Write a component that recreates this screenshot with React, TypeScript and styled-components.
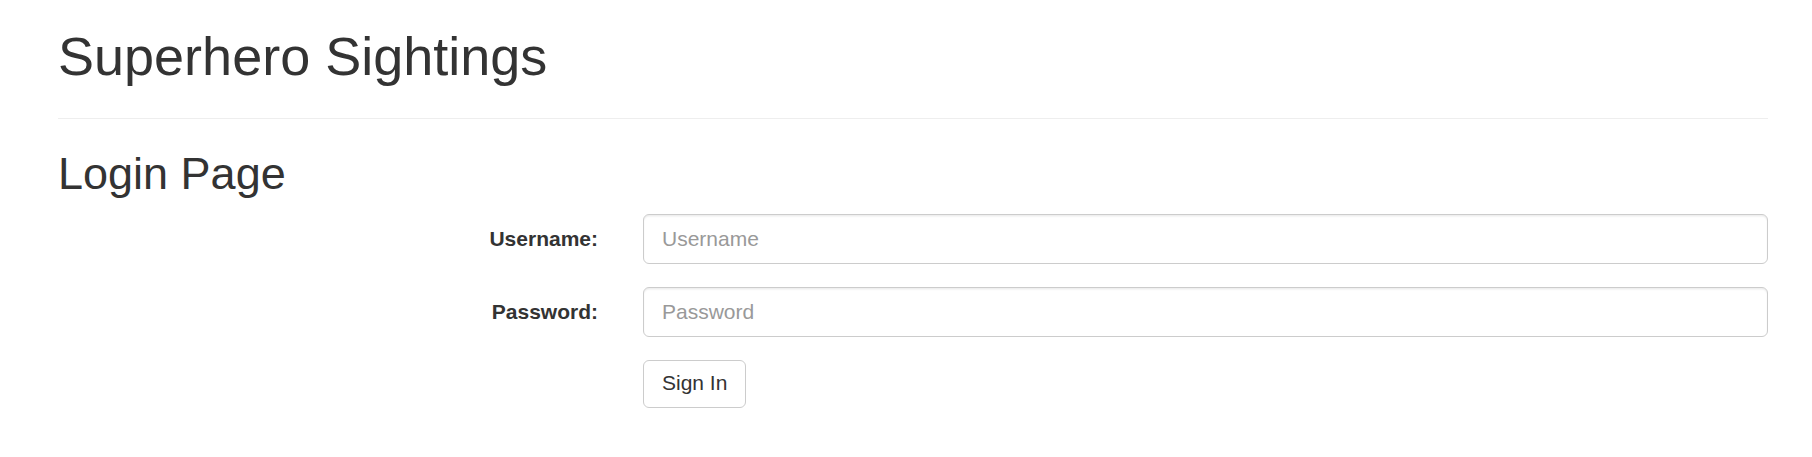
import React from "react";
import styled, { createGlobalStyle } from "styled-components";

const GlobalStyle = createGlobalStyle`
  html, body {
    margin: 0;
    padding: 0;
    background: #fff;
  }
  body {
    font-family: "Liberation Sans", Arial, Helvetica, sans-serif;
    font-size: 21px;
    line-height: 30px;
    color: #333;
  }
  * { box-sizing: border-box; }
`;

const Container = styled.div`
  width: 1710px;
  margin-left: 58px;
`;

const Title = styled.h1`
  margin: 27px 0 0;
  font-size: 54px;
  line-height: 59px;
  font-weight: 500;
  color: #333;
`;

const Rule = styled.hr`
  margin: 32px 0 30px;
  border: 0;
  border-top: 1px solid #eee;
  height: 0;
`;

const Subtitle = styled.h2`
  margin: 0 0 15px;
  font-size: 45px;
  line-height: 49.5px;
  font-weight: 500;
  color: #333;
`;

const Form = styled.form`
  display: flex;
  flex-direction: column;
  gap: 22.5px;
`;

const FormRow = styled.div`
  display: grid;
  grid-template-columns: 540px 1fr;
  column-gap: 45px;
  align-items: start;
`;

const Label = styled.label`
  padding-top: 10.5px;
  font-weight: 700;
  font-size: 21px;
  line-height: 30px;
  text-align: right;
  color: #333;
`;

const Input = styled.input`
  display: block;
  width: 100%;
  height: 50.5px;
  padding: 9px 18px;
  font-family: inherit;
  font-size: 21px;
  line-height: 30px;
  color: #555;
  background: #fff;
  border: 1px solid #ccc;
  border-radius: 6px;
  box-shadow: inset 0 1.5px 1.5px rgba(0, 0, 0, 0.075);
  outline: none;
  &::placeholder {
    color: #999;
  }
`;

const Button = styled.button`
  grid-column: 2;
  justify-self: start;
  height: 48.5px;
  padding: 7px 18px 9px;
  font-family: inherit;
  font-size: 21px;
  line-height: 30px;
  color: #333;
  background: #fff;
  border: 1px solid #ccc;
  border-radius: 6px;
  cursor: pointer;
`;

export default function App() {
  return (
    <>
      <GlobalStyle />
      <Container>
        <Title>Superhero Sightings</Title>
        <Rule />
        <Subtitle>Login Page</Subtitle>
        <Form onSubmit={(e) => e.preventDefault()}>
          <FormRow>
            <Label htmlFor="username">Username:</Label>
            <Input id="username" type="text" placeholder="Username" />
          </FormRow>
          <FormRow>
            <Label htmlFor="password">Password:</Label>
            <Input id="password" type="password" placeholder="Password" />
          </FormRow>
          <FormRow>
            <Button type="submit">Sign In</Button>
          </FormRow>
        </Form>
      </Container>
    </>
  );
}
